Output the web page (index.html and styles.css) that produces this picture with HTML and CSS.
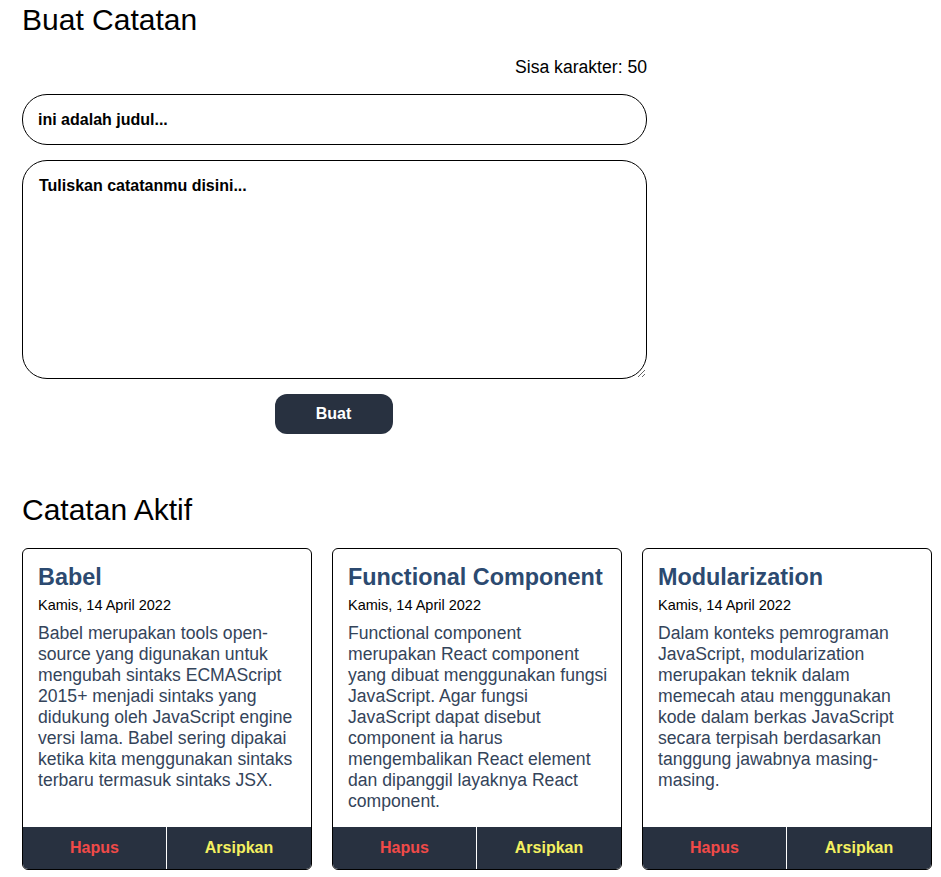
FILE: index.html
```html
<!DOCTYPE html>
<html lang="id">
<head>
<meta charset="utf-8">
<title>Catatan</title>
<link rel="stylesheet" href="styles.css">
</head>
<body>
<main class="page">
  <section class="create">
    <h1 class="section-title">Buat Catatan</h1>
    <form class="note-form">
      <p class="char-count">Sisa karakter: 50</p>
      <input class="note-input" type="text" placeholder="ini adalah judul...">
      <textarea class="note-textarea" placeholder="Tuliskan catatanmu disini..."></textarea>
      <button class="submit-btn" type="button">Buat</button>
    </form>
  </section>
  <section class="active">
    <h2 class="section-title">Catatan Aktif</h2>
    <div class="notes-grid">
      <article class="note-card">
        <div class="note-content">
          <h3 class="note-title">Babel</h3>
          <p class="note-date">Kamis, 14 April 2022</p>
          <p class="note-body">Babel merupakan tools open-source yang digunakan untuk mengubah sintaks ECMAScript 2015+ menjadi sintaks yang didukung oleh JavaScript engine versi lama. Babel sering dipakai ketika kita menggunakan sintaks terbaru termasuk sintaks JSX.</p>
        </div>
        <div class="note-actions">
          <button class="action-btn delete" type="button">Hapus</button>
          <button class="action-btn archive" type="button">Arsipkan</button>
        </div>
      </article>
      <article class="note-card">
        <div class="note-content">
          <h3 class="note-title">Functional Component</h3>
          <p class="note-date">Kamis, 14 April 2022</p>
          <p class="note-body">Functional component merupakan React component yang dibuat menggunakan fungsi JavaScript. Agar fungsi JavaScript dapat disebut component ia harus mengembalikan React element dan dipanggil layaknya React component.</p>
        </div>
        <div class="note-actions">
          <button class="action-btn delete" type="button">Hapus</button>
          <button class="action-btn archive" type="button">Arsipkan</button>
        </div>
      </article>
      <article class="note-card">
        <div class="note-content">
          <h3 class="note-title">Modularization</h3>
          <p class="note-date">Kamis, 14 April 2022</p>
          <p class="note-body">Dalam konteks pemrograman JavaScript, modularization merupakan teknik dalam memecah atau menggunakan kode dalam berkas JavaScript secara terpisah berdasarkan tanggung jawabnya masing-masing.</p>
        </div>
        <div class="note-actions">
          <button class="action-btn delete" type="button">Hapus</button>
          <button class="action-btn archive" type="button">Arsipkan</button>
        </div>
      </article>
    </div>
  </section>
</main>
</body>
</html>
```

FILE: styles.css
```css
* {
  box-sizing: border-box;
}

body {
  margin: 0;
  font-family: "Liberation Sans", Arial, sans-serif;
  color: #000;
  background: #fff;
}

.page {
  padding: 2px 22px 0 22px;
}

.section-title {
  margin: 0;
  font-size: 30px;
  font-weight: 400;
  line-height: 35px;
}

.note-form {
  width: 625px;
  display: flex;
  flex-direction: column;
}

.char-count {
  margin: 20px 0 0 0;
  text-align: right;
  font-size: 17.6px;
  line-height: 20px;
}

.note-input {
  margin-top: 17px;
  height: 51px;
  border: 1px solid #000;
  border-radius: 25px;
  padding: 0 15px;
  font-family: inherit;
  font-size: 16px;
  font-weight: 700;
  outline: none;
}

.note-textarea {
  margin-top: 15px;
  height: 219px;
  border: 1px solid #000;
  border-radius: 25px;
  padding: 16px 16px;
  font-family: inherit;
  font-size: 16px;
  font-weight: 700;
  line-height: 18.4px;
  resize: both;
  outline: none;
}

.note-input::placeholder,
.note-textarea::placeholder {
  color: #000;
  opacity: 1;
  font-weight: 700;
}

.submit-btn {
  align-self: center;
  margin-top: 15px;
  margin-right: 2px;
  width: 118px;
  height: 40px;
  border: none;
  border-radius: 12px;
  background: #283140;
  color: #fff;
  font-family: inherit;
  font-size: 16px;
  font-weight: 700;
}

.active {
  margin-top: 58px;
}

.notes-grid {
  margin-top: 21px;
  display: grid;
  grid-template-columns: repeat(3, 290px);
  gap: 20px;
}

.note-card {
  border: 1px solid #000;
  border-radius: 6px;
  overflow: hidden;
  display: flex;
  flex-direction: column;
  height: 322px;
}

.note-content {
  flex: 1;
  padding: 15px 8px 13px 15px;
}

.note-title {
  margin: 0;
  font-size: 23.4px;
  line-height: 26.9px;
  font-weight: 700;
  color: #2c4a70;
}

.note-date {
  margin: 6px 0 0 0;
  font-size: 14.5px;
  line-height: 16.7px;
}

.note-body {
  margin: 9px 0 0 0;
  font-size: 17.6px;
  line-height: 21.1px;
  color: #34445a;
}

.note-actions {
  display: grid;
  grid-template-columns: 1fr 1fr;
  height: 42px;
  background: #283140;
}

.action-btn {
  border: none;
  background: transparent;
  font-family: inherit;
  font-size: 16px;
  font-weight: 700;
  padding: 0;
}

.action-btn.delete {
  color: #f04a48;
  border-right: 1px solid #fff;
}

.action-btn.archive {
  color: #f4f060;
}
```
